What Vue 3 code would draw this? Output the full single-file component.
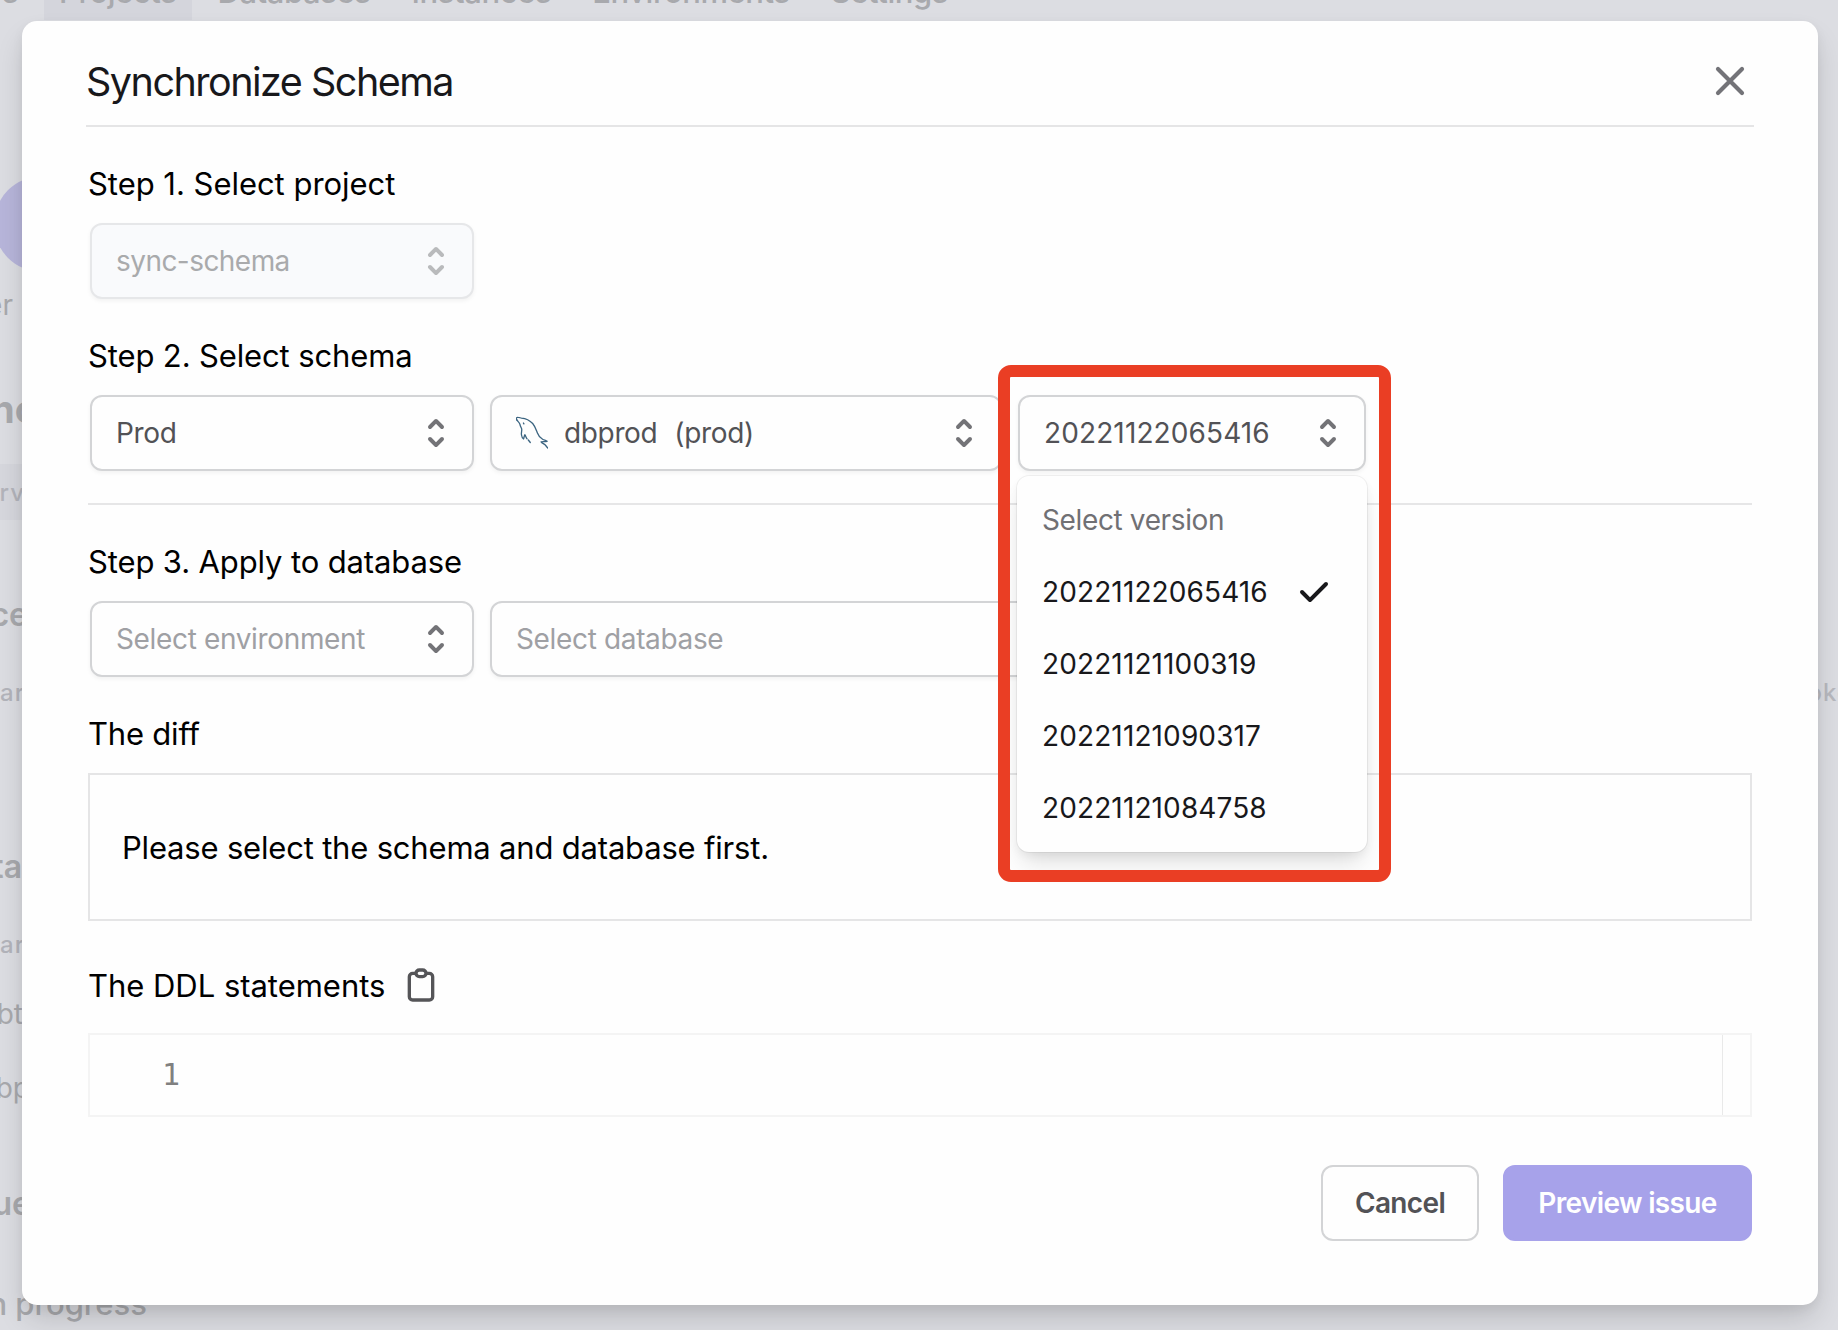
<script setup>
const navItems = ['Projects', 'Databases', 'Instances', 'Environments', 'Settings']

const pageRows = [
  { text: 'ner', kind: 'owner' },
  { text: 'Ano', kind: 'heading' },
  { text: 'Serv', kind: 'label band' },
  { text: 'Instance', kind: 'section instance' },
  { text: 'Nar', kind: 'label' },
  { text: 'Data', kind: 'section data' },
  { text: 'Nar', kind: 'label' },
  { text: 'dbt', kind: 'cell first' },
  { text: 'dbp', kind: 'cell second' },
  { text: 'Issue', kind: 'section issue' },
]

const versions = ['20221122065416', '20221121100319', '20221121090317', '20221121084758']
const selectedVersion = versions[0]

const selectorPath =
  'M10 3a1 1 0 01.707.293l3 3a1 1 0 01-1.414 1.414L10 5.414 7.707 7.707a1 1 0 01-1.414-1.414l3-3A1 1 0 0110 3zm-3.707 9.293a1 1 0 011.414 0L10 14.586l2.293-2.293a1 1 0 011.414 1.414l-3 3a1 1 0 01-1.414 0l-3-3a1 1 0 010-1.414z'
</script>

<template>
  <div class="screen">
    <!-- Dimmed page behind the dialog -->
    <div class="page">
      <nav class="nav">
        <span class="brand">s</span>
        <span v-for="(item, i) in navItems" :key="item" class="nav-item" :class="{ current: i === 0 }">{{ item }}</span>
      </nav>
      <div class="avatar"></div>
      <div class="page-rows">
        <div v-for="(row, i) in pageRows" :key="i" class="page-row" :class="row.kind">
          <span>{{ row.text }}</span>
        </div>
      </div>
      <div class="page-right">oke</div>
      <div class="page-foot">In progress</div>
    </div>

    <div class="dialog">
      <header class="header">
        <h1>Synchronize Schema</h1>
        <svg class="close" viewBox="0 0 24 24"><path d="M6 18L18 6M6 6l12 12" /></svg>
      </header>

      <main class="content">
        <h2 class="step1">Step 1. Select project</h2>
        <div class="row">
          <div class="select env disabled">
            <span>sync-schema</span>
            <svg class="selector" viewBox="0 0 20 20"><path :d="selectorPath" /></svg>
          </div>
        </div>

        <h2 class="step2">Step 2. Select schema</h2>
        <div class="row">
          <div class="select env">
            <span>Prod</span>
            <svg class="selector" viewBox="0 0 20 20"><path :d="selectorPath" /></svg>
          </div>
          <div class="select db">
            <svg class="dolphin" viewBox="0 0 32 33">
              <path d="M1 4.2C-.3 2.4.4 1.2 2.2 1.4c1.300 0 2 .5 3.300.7 4.500.4 8.300 2.300 11.200 5.400 2.300 2.700 3.300 5.800 4.600 9.200 1 2.800 2.700 5 5.300 6.500 1.700 1 3.400 1.100 4.500 2.100-2 .5-4.300.1-6 .6.7 1.300 2.700 1.800 4.200 3.100l2.400 3" />
              <path d="M1 4.200c1 1.500 2.300 2 2.900 4 .3 2 1.200 3.200 1.800 4.700.4 2.200-.8 4.100-.2 6.100.3 1.900.8 3.500 2 4 .7-1.200.4-2.700 1.300-4.300.9 1.300 1.400 3 2.300 4.100M12.300 24l2 2.500" />
              <path d="M7.400 7l.5.900" />
            </svg>
            <span>dbprod</span><span class="env-name">(prod)</span>
            <svg class="selector" viewBox="0 0 20 20"><path :d="selectorPath" /></svg>
          </div>
          <div class="version">
            <div class="select">
              <span class="digits">{{ selectedVersion }}</span>
              <svg class="selector" viewBox="0 0 20 20"><path :d="selectorPath" /></svg>
            </div>
            <div class="menu">
              <div class="option caption">Select version</div>
              <div v-for="v in versions" :key="v" class="option">
                <span class="digits">{{ v }}</span>
                <svg v-if="v === selectedVersion" class="check" viewBox="0 0 20 20">
                  <path d="M16.707 5.293a1 1 0 010 1.414l-8 8a1 1 0 01-1.414 0l-4-4a1 1 0 011.414-1.414L8 12.586l7.293-7.293a1 1 0 011.414 0z" />
                </svg>
              </div>
            </div>
            <div class="highlight"></div>
          </div>
        </div>

        <hr class="divider" />

        <h2 class="step3">Step 3. Apply to database</h2>
        <div class="row">
          <div class="select env placeholder">
            <span>Select environment</span>
            <svg class="selector" viewBox="0 0 20 20"><path :d="selectorPath" /></svg>
          </div>
          <div class="select target placeholder"><span>Select database</span></div>
        </div>

        <h2 class="diff">The diff</h2>
        <div class="diff-box">Please select the schema and database first.</div>

        <div class="ddl">
          <h2>The DDL statements</h2>
          <svg class="clipboard" viewBox="0 0 24 24">
            <path d="M9 5H7a2 2 0 00-2 2v12a2 2 0 002 2h10a2 2 0 002-2V7a2 2 0 00-2-2h-2M9 5a2 2 0 002 2h2a2 2 0 002-2M9 5a2 2 0 012-2h2a2 2 0 012 2" />
          </svg>
        </div>
        <div class="editor">
          <div class="code"><span class="line-no">1</span></div>
          <div class="ruler"></div>
        </div>

        <footer class="actions">
          <button class="btn cancel">Cancel</button>
          <button class="btn primary">Preview issue</button>
        </footer>
      </main>
    </div>
  </div>
</template>

<style>
body {
  margin: 0;
}
</style>

<style scoped>
* {
  box-sizing: border-box;
}
.screen {
  position: relative;
  width: 1838px;
  height: 1330px;
  padding: 21px 20px 25px 22px;
  overflow: hidden;
  background: #dcdde2;
  font-family: Inter, "Liberation Sans", sans-serif;
  color: #000;
}

/* page underneath */
.page {
  position: absolute;
  inset: 0;
  overflow: hidden;
  color: #a8a9ad;
}
.nav {
  display: flex;
  height: 33px;
  margin-top: -13px;
  font-size: 31px;
  font-weight: 500;
  line-height: 10px;
}
.brand {
  width: 44px;
  padding-left: 2px;
}
.nav-item {
  padding: 0 16px 0 15px;
  margin-right: 10px;
  letter-spacing: -0.43px;
}
.nav-item.current {
  background: #d4d5dc;
}
.avatar {
  width: 96px;
  height: 96px;
  margin: 156px 0 0 -6px;
  border-radius: 50%;
  background: #b7b5da;
}
.page-rows {
  width: 25px;
}
.page-row {
  display: flex;
  align-items: center;
  justify-content: flex-end;
  height: 40px;
  white-space: nowrap;
}
.owner {
  margin-top: 13px;
  padding-right: 12px;
  font-size: 28px;
}
.heading {
  margin-top: 64px;
  margin-right: -13px;
  font-size: 38px;
  font-weight: 700;
}
.section {
  font-size: 32px;
  font-weight: 600;
}
.instance {
  margin-top: 74px;
  margin-right: -3px;
}
.data {
  margin-top: 134px;
  padding-right: 3px;
}
.issue {
  margin-top: 75px;
  margin-right: -6px;
}
.label {
  margin-top: 38px;
  font-size: 24px;
  font-weight: 500;
  letter-spacing: 1px;
  color: #b3b4bb;
}
.band {
  height: 56px;
  margin-top: 35px;
  background: #d6d7dd;
}
.cell {
  font-size: 28px;
}
.first {
  margin-top: 30px;
  padding-right: 2px;
}
.second {
  margin-top: 34px;
  margin-right: -5px;
}
.page-right {
  position: absolute;
  right: -14px;
  top: 678px;
  font-size: 24px;
  font-weight: 500;
  letter-spacing: 1px;
  color: #b7b8be;
}
.page-foot {
  position: absolute;
  left: -20px;
  top: 1284px;
  font-size: 31px;
  font-weight: 500;
  line-height: 40px;
}

/* dialog */
.dialog {
  position: relative;
  width: 1796px;
  height: 1284px;
  border-radius: 15px;
  background: #fefefe;
  box-shadow: 0 16px 30px -4px rgba(0, 0, 0, 0.16), 0 4px 12px rgba(0, 0, 0, 0.05);
}
.header {
  display: flex;
  align-items: center;
  justify-content: space-between;
  height: 106px;
  margin: 0 64px;
  padding-top: 16px;
  border-bottom: 2px solid #e5e5e6;
}
h1,
h2 {
  margin: 0;
  font-weight: 400;
  white-space: nowrap;
}
h1 {
  padding-top: 2px;
  font-size: 39.5px;
  line-height: 56px;
  letter-spacing: -1.5px;
  color: #18181b;
}
.close {
  width: 48px;
  height: 48px;
  fill: none;
  stroke: #737378;
  stroke-width: 2.1;
  stroke-linecap: round;
}
.content {
  padding: 0 66px;
}
h2 {
  height: 32px;
  font-size: 31px;
  line-height: 32px;
  letter-spacing: -0.03px;
}
.step1,
.step2,
.step3 {
  margin-top: 41px;
  margin-bottom: 23px;
}
.step2,
.step3 {
  letter-spacing: -0.13px;
}
.diff {
  margin-top: 41px;
  letter-spacing: -0.2px;
}
.row {
  display: flex;
  gap: 16px;
  padding-left: 2px;
}
.select {
  display: flex;
  align-items: center;
  height: 76px;
  padding: 0 16px 0 24px;
  border: 2px solid #d3d4d6;
  border-radius: 12px;
  background: #fefefe;
  box-shadow: 0 2px 4px rgba(0, 0, 0, 0.05);
  font-size: 28px;
  line-height: 40px;
  letter-spacing: -0.35px;
  white-space: nowrap;
  color: #525256;
}
.env {
  width: 384px;
}
.db {
  width: 512px;
}
.target {
  width: 750px;
}
.placeholder {
  color: #9fa0a4;
}
.disabled {
  background: #f9fafc;
  border-color: #e6e7e9;
  letter-spacing: -0.55px;
  color: #a9aaac;
}
.selector {
  width: 40px;
  height: 40px;
  margin-left: auto;
  fill: #737377;
}
.disabled .selector {
  fill: #b9babc;
}
.dolphin {
  width: 32px;
  height: 33px;
  margin-right: 16px;
  margin-bottom: 2px;
  fill: none;
  stroke: #3b6480;
  stroke-width: 1.3;
  stroke-linecap: round;
  stroke-linejoin: round;
}
.env-name {
  margin-left: 17px;
}
.version {
  position: relative;
  width: 348px;
}
.menu {
  position: absolute;
  z-index: 1;
  top: 81px;
  left: -1px;
  width: 350px;
  height: 376px;
  padding: 8px 0;
  border-radius: 12px;
  background: #fefefe;
  box-shadow: 0 0 0 1px rgba(0, 0, 0, 0.05), 0 16px 24px -6px rgba(0, 0, 0, 0.13), 0 4px 10px rgba(0, 0, 0, 0.05);
}
.option {
  display: flex;
  align-items: center;
  justify-content: space-between;
  height: 72px;
  padding: 0 33px 0 25px;
  font-size: 28px;
  color: #18181b;
}
.digits {
  letter-spacing: 0.12px;
}
.caption {
  letter-spacing: -0.37px;
  color: #707074;
}
.check {
  width: 40px;
  height: 40px;
  fill: #18181b;
}
.highlight {
  position: absolute;
  z-index: 2;
  top: -30px;
  left: -20px;
  width: 393px;
  height: 517px;
  border: 12px solid #ea3e24;
  border-radius: 13px;
}
.divider {
  height: 2px;
  margin: 32px 0 0;
  border: 0;
  background: #e6e6e7;
}
.diff-box {
  display: flex;
  align-items: center;
  height: 148px;
  margin-top: 23px;
  padding-left: 32px;
  border: 2px solid #e5e5e6;
  font-size: 31px;
  letter-spacing: -0.19px;
}
.ddl {
  display: flex;
  align-items: center;
  height: 40px;
  margin-top: 45px;
}
.clipboard {
  width: 40px;
  height: 40px;
  margin-left: 16px;
  margin-bottom: 3px;
  fill: none;
  stroke: #555558;
  stroke-width: 2;
  stroke-linecap: round;
  stroke-linejoin: round;
}
.editor {
  display: flex;
  height: 84px;
  margin-top: 27px;
  border: 2px solid #f4f4f4;
}
.code {
  flex: 1;
  padding-left: 72px;
  font-family: "DejaVu Sans Mono", monospace;
  font-size: 30px;
  line-height: 80px;
  color: #808080;
}
.ruler {
  width: 28px;
  border-left: 1px solid #e9e9e9;
}
.actions {
  display: flex;
  justify-content: flex-end;
  gap: 24px;
  margin-top: 48px;
}
.btn {
  height: 76px;
  padding: 0;
  border: 2px solid #d3d4d6;
  border-radius: 12px;
  font-family: inherit;
  font-size: 28px;
  font-weight: 600;
  letter-spacing: -0.65px;
}
.cancel {
  width: 158px;
  background: #fefefe;
  color: #525256;
}
.primary {
  width: 249px;
  border-color: #a7a2ea;
  background: #a7a2ea;
  color: #fff;
}
</style>
